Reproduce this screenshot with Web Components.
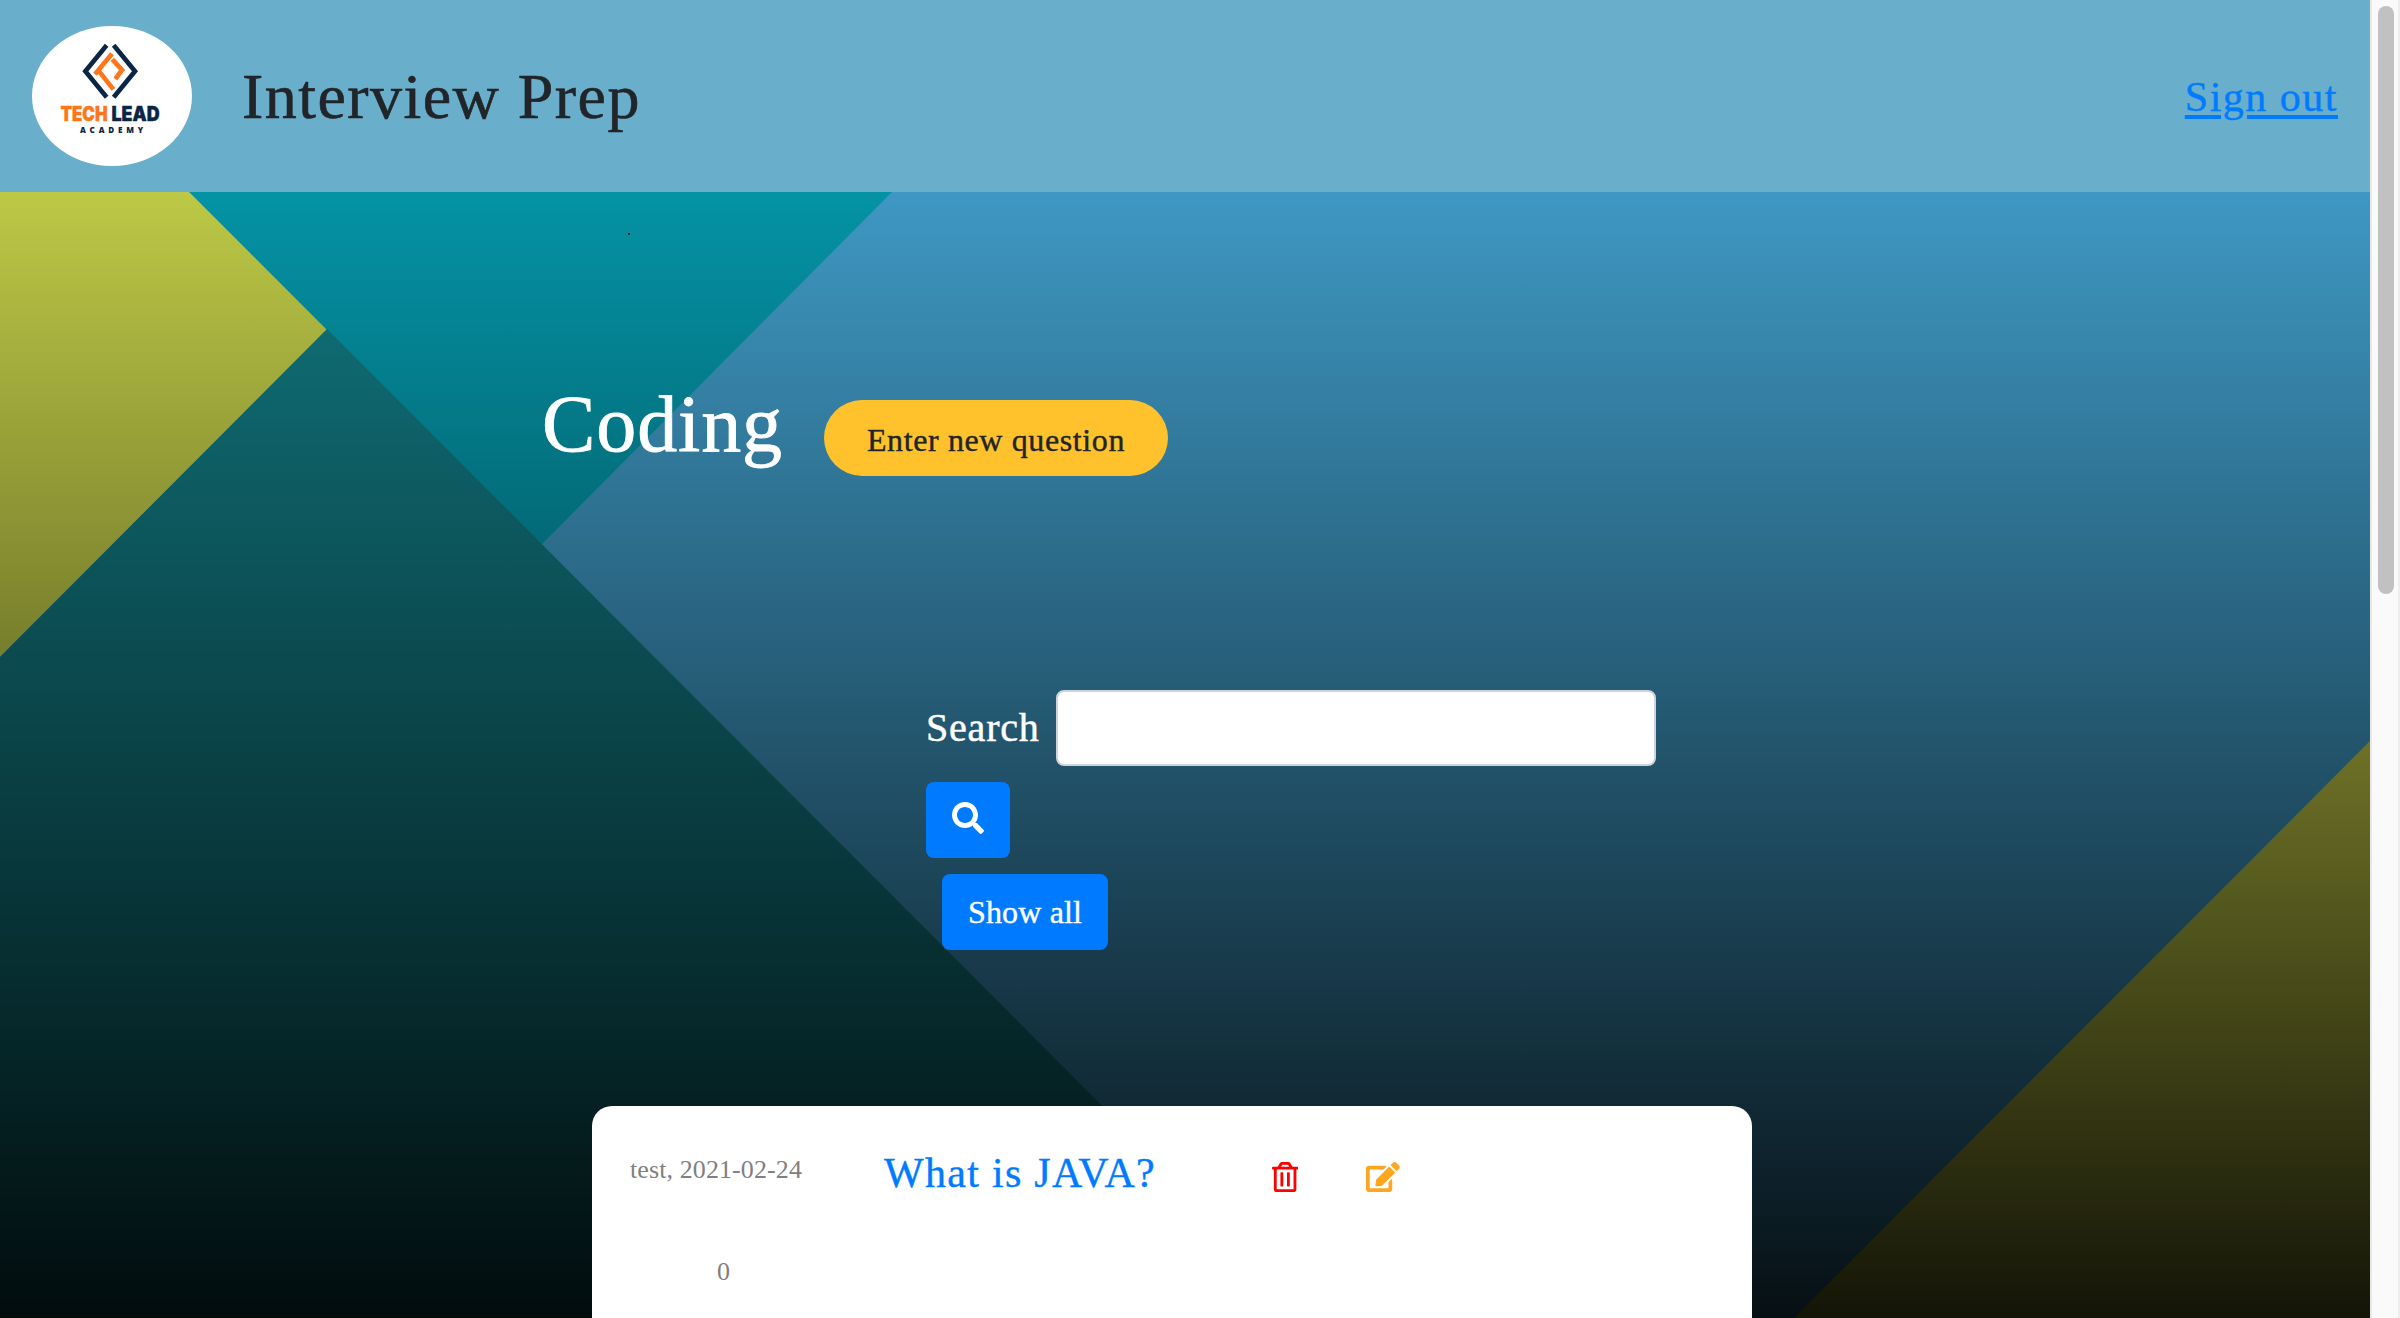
<!DOCTYPE html>
<html lang="en">
<head>
<meta charset="utf-8">
<title>Interview Prep</title>
<style>
  html, body { margin: 0; height: 100%; overflow: hidden; }
  body { font-family: "Liberation Serif", "Times New Roman", serif; color: #212529; }
</style>
</head>
<body>
<prep-app></prep-app>
<script>
const define = (name, html) => {
  const template = document.createElement('template');
  template.innerHTML = html;
  customElements.define(name, class extends HTMLElement {
    constructor() {
      super();
      this.attachShadow({ mode: 'open' }).append(template.content.cloneNode(true));
    }
  });
};

define('academy-logo', `
<style>
  :host { display: block; width: 160px; height: 140px; border-radius: 50%; background: #fff; overflow: hidden; }
  svg { display: block; }
  text { font-family: Inter, "Open Sans", sans-serif; font-weight: 900; }
</style>
<svg width="160" height="140" viewBox="0 0 160 140">
  <g transform="translate(-2 -6) scale(.33333)" fill="none">
    <g stroke="#0b2545" stroke-width="14">
      <path d="M230 76 166 154 230 232"/><path d="M251 76 315 154 251 232"/>
    </g>
    <g stroke="#ff751a" stroke-width="14">
      <path d="M246 101 195 163"/><path d="M205 151 250 208"/><path d="M247 118 276 150 256 177"/>
    </g>
  </g>
  <text x="28.5" y="94.7" font-size="19.5" fill="#ff751a" stroke="#ff751a" stroke-width=".4" textLength="47" lengthAdjust="spacingAndGlyphs">TECH</text>
  <text x="79.5" y="94.7" font-size="19.5" fill="#0b2545" stroke="#0b2545" stroke-width=".4" textLength="48" lengthAdjust="spacingAndGlyphs">LEAD</text>
  <text x="48" y="107" font-size="8" style="font-family: 'Open Sans', sans-serif; font-weight: 800" fill="#0b2545" textLength="63">ACADEMY</text>
</svg>`);

define('site-header', `
<style>
  :host { display: flex; align-items: center; box-sizing: border-box; height: 192px; padding: 0 32px; background: #69aecb; }
  h1 { margin: 0 auto 0 50px; font-size: 64px; font-weight: 400; line-height: 76px; letter-spacing: 1.45px; padding-top: 1px; -webkit-text-stroke: .6px; }
  a { font-size: 42px; line-height: 50px; padding-top: 1px; letter-spacing: 1.5px; color: #007bff; -webkit-text-stroke: .4px; text-decoration: underline; text-decoration-thickness: 4px; text-underline-offset: 4px; }
</style>
<academy-logo></academy-logo>
<h1><slot></slot></h1>
<a href="#">Sign out</a>`);

define('geo-backdrop', `
<style>
  :host { display: block; position: absolute; inset: 0; }
  svg { display: block; width: 100%; height: 100%; }
</style>
<svg viewBox="0 192 2370 1126" preserveAspectRatio="none">
  <defs><linearGradient id="shade" x1="0" y1="0" x2="0" y2="1">
    <stop offset="0" stop-color="#000" stop-opacity="0"/><stop offset="1" stop-color="#000" stop-opacity=".9"/>
  </linearGradient></defs>
  <path fill="#3e98c3" d="M0 192H2370V1318H0z"/>
  <path fill="#0493a5" d="M189 192H892L541 545z"/>
  <path fill="#bdc846" d="M0 192H189L327 330 0 657z"/>
  <path fill="#11777f" d="M327 329 1314 1318H0V657z"/>
  <path fill="#c3cb44" d="M2370 741V1318H1794z"/>
  <path fill="url(#shade)" d="M0 192H2370V1318H0z"/>
</svg>`);

define('action-button', `
<style>
  :host { display: inline-flex; }
  button { display: flex; align-items: center; justify-content: center; box-sizing: border-box; height: 76px; padding: 0 26px; border: 0; border-radius: 8px; background: #007bff; color: #fff; font: 32px/38px "Liberation Serif", serif; letter-spacing: .15px; -webkit-text-stroke: .4px; }
  :host([pill]) button { width: 344px; padding: 3px 0 0; border-radius: 38px; background: #ffc22d; color: #212529; letter-spacing: .62px; }
</style>
<button><slot></slot></button>`);

define('fa-icon', `
<style>
  :host { display: block; line-height: 0; }
  svg { display: none; fill: currentColor; }
  :host([name=search]) .search, :host([name=trash]) .trash, :host([name=edit]) .edit { display: block; }
</style>
<svg class="search" width="32" height="32" viewBox="0 0 512 512"><path d="M505 442.7L405.3 343c-4.5-4.5-10.6-7-17-7H372c27.6-35.3 44-79.7 44-128C416 93.1 322.9 0 208 0S0 93.1 0 208s93.1 208 208 208c48.3 0 92.7-16.4 128-44v16.3c0 6.4 2.5 12.5 7 17l99.7 99.7c9.4 9.4 24.6 9.4 33.9 0l28.3-28.3c9.4-9.4 9.4-24.6.1-34zM208 336c-70.7 0-128-57.2-128-128 0-70.7 57.2-128 128-128 70.7 0 128 57.2 128 128 0 70.7-57.2 128-128 128z"/></svg>
<svg class="trash" width="26.25" height="30" viewBox="0 0 448 512"><path d="M268 416h24a12 12 0 0 0 12-12V188a12 12 0 0 0-12-12h-24a12 12 0 0 0-12 12v216a12 12 0 0 0 12 12zM432 80h-82.41l-34-56.7A48 48 0 0 0 274.41 0H173.59a48 48 0 0 0-41.16 23.3L98.41 80H16A16 16 0 0 0 0 96v16a16 16 0 0 0 16 16h16v336a48 48 0 0 0 48 48h288a48 48 0 0 0 48-48V128h16a16 16 0 0 0 16-16V96a16 16 0 0 0-16-16zM171.84 50.91A6 6 0 0 1 177 48h94a6 6 0 0 1 5.15 2.91L293.61 80H154.39zM368 464H80V128h288zm-212-48h24a12 12 0 0 0 12-12V188a12 12 0 0 0-12-12h-24a12 12 0 0 0-12 12v216a12 12 0 0 0 12 12z"/></svg>
<svg class="edit" width="33.75" height="30" viewBox="0 0 576 512"><path d="M402.6 83.2l90.2 90.2c3.8 3.8 3.8 10 0 13.8L274.4 405.6l-92.8 10.3c-12.4 1.4-22.9-9.1-21.5-21.5l10.3-92.8L388.8 83.2c3.8-3.8 10-3.8 13.8 0zm162-22.9l-48.8-48.8c-15.2-15.2-39.9-15.2-55.2 0l-35.4 35.4c-3.8 3.8-3.8 10 0 13.8l90.2 90.2c3.8 3.8 10 3.8 13.8 0l35.4-35.4c15.2-15.3 15.2-40 0-55.2zM384 346.2V448H64V128h229.8c3.2 0 6.2-1.3 8.5-3.5l40-40c7.6-7.6 2.2-20.5-8.5-20.5H48C21.5 64 0 85.5 0 112v352c0 26.5 21.5 48 48 48h352c26.5 0 48-21.5 48-48V306.2c0-10.7-12.9-16-20.5-8.5l-40 40c-2.2 2.3-3.5 5.3-3.5 8.5z"/></svg>`);

define('search-form', `
<style>
  :host { display: flex; flex-direction: column; align-items: flex-start; gap: 16px; }
  .field { display: flex; align-items: center; }
  label { width: 130px; font-size: 40px; line-height: 48px; letter-spacing: .8px; color: #fff; -webkit-text-stroke: .5px; }
  input { box-sizing: border-box; width: 600px; height: 76px; margin: 0; border: 2px solid #ced4da; border-radius: 8px; background: #fff; }
  .all { margin-left: 16px; }
  fa-icon { margin-bottom: 4px; }
</style>
<div class="field"><label for="q">Search</label><input id="q" type="text"></div>
<action-button aria-label="Search"><fa-icon name="search"></fa-icon></action-button>
<action-button class="all">Show all</action-button>`);

define('question-card', `
<style>
  :host { display: block; box-sizing: border-box; width: 1160px; height: 240px; padding: 42px 38px; border-radius: 20px; background: #fff; }
  .row { display: flex; align-items: flex-start; height: 96px; }
  .meta, .count { font-size: 26px; line-height: 42px; color: #808080; padding-top: 1px; }
  .meta { width: 254px; letter-spacing: .1px; }
  .count { margin-top: 6px; padding-left: 87px; }
  .title { width: 388px; font-size: 42px; line-height: 50px; letter-spacing: 1.3px; color: #007bff; text-decoration: none; white-space: nowrap; -webkit-text-stroke: .4px; }
  fa-icon { margin-top: 14px; }
  fa-icon[name=trash] { width: 94px; color: #f00; }
  fa-icon[name=edit] { color: #ffa621; }
</style>
<div class="row">
  <span class="meta"><slot name="meta"></slot></span>
  <a class="title" href="#"><slot></slot></a>
  <fa-icon name="trash"></fa-icon>
  <fa-icon name="edit"></fa-icon>
</div>
<div class="count"><slot name="count"></slot></div>`);

define('page-scrollbar', `
<style>
  :host { display: block; box-sizing: border-box; width: 30px; padding: 6px 4px 0 6px; background: #fafafa; border-left: 2px solid #e8e8e8; border-right: 2px solid #ededed; }
  div { width: 16px; height: 588px; border-radius: 8px; background: #c1c1c1; }
</style>
<div></div>`);

define('prep-app', `
<style>
  :host { display: flex; width: 2400px; height: 1318px; overflow: hidden; }
  .page { display: flex; flex-direction: column; width: 2370px; }
  main { position: relative; height: 1126px; overflow: hidden; }
  .content { position: relative; display: flex; flex-direction: column; align-items: flex-start; }
  .dot { margin: 21px 0 0 627px; font-size: 16px; line-height: 34px; color: #000; }
  .heading { display: flex; align-items: flex-start; height: 294px; margin: 129px 0 0 542px; }
  h2 { width: 282px; margin: 0; font-size: 80px; line-height: 96px; font-weight: 400; letter-spacing: .9px; color: #fff; -webkit-text-stroke: .8px; }
  .heading action-button { margin-top: 24px; }
  search-form { margin: 20px 0 0 926px; }
  question-card { margin: 156px 0 0 592px; }
</style>
<div class="page">
  <site-header>Interview Prep</site-header>
  <main>
    <geo-backdrop></geo-backdrop>
    <div class="content">
      <span class="dot">.</span>
      <div class="heading"><h2>Coding</h2><action-button pill>Enter new question</action-button></div>
      <search-form></search-form>
      <question-card><span slot="meta">test, 2021-02-24</span>What is JAVA?<span slot="count">0</span></question-card>
    </div>
  </main>
</div>
<page-scrollbar></page-scrollbar>`);
</script>
</body>
</html>
